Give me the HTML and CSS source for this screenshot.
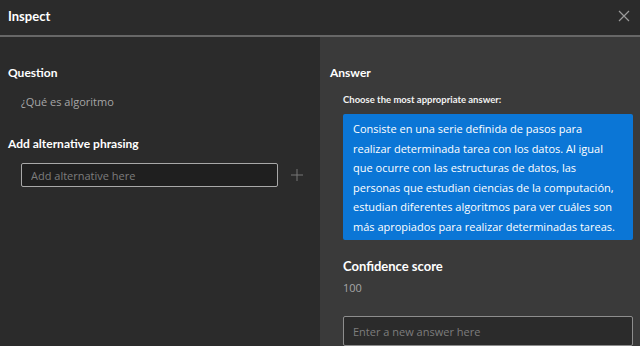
FILE: index.html
```html
<!DOCTYPE html>
<html lang="en">
<head>
    <meta charset="UTF-8">
    <title>Inspect</title>
    <link rel="stylesheet" href="styles.css">
</head>
<body>
    <div class="header">
        <div class="title">Inspect</div>
        <svg class="close" width="12" height="12" viewBox="0 0 12 12">
            <path d="M1 1 L11 11 M11 1 L1 11" stroke="#9a9a9a" stroke-width="1.2" fill="none"/>
        </svg>
    </div>

    <div class="panels">
        <div class="panel left">
            <div class="label">Question</div>
            <div class="question">¿Qué es algoritmo</div>

            <div class="label alt-label">Add alternative phrasing</div>
            <div class="alt-row">
                <input type="text" class="field alt-input" placeholder="Add alternative here">
                <svg class="plus" width="12" height="12" viewBox="0 0 12 12">
                    <path d="M6 0 V12 M0 6 H12" stroke="#777" stroke-width="1" fill="none"/>
                </svg>
            </div>
        </div>

        <div class="panel right">
            <div class="label">Answer</div>
            <div class="hint">Choose the most appropriate answer:</div>
            <div class="answer">Consiste en una serie definida de pasos para realizar determinada tarea con los datos. Al igual que ocurre con las estructuras de datos, las personas que estudian ciencias de la computación, estudian diferentes algoritmos para ver cuáles son más apropiados para realizar determinadas tareas.</div>

            <div class="label score-label">Confidence score</div>
            <div class="score">100</div>

            <input type="text" class="field new-answer" placeholder="Enter a new answer here">
        </div>
    </div>
</body>
</html>
```

FILE: styles.css
```css
* {
    margin: 0;
    padding: 0;
    box-sizing: border-box;
}

body {
    background-color: #2b2b2b;
    color: #ffffff;
    font-family: 'Open Sans', 'Noto Sans', sans-serif;
    font-size: 11px;
    height: 100vh;
    display: flex;
    flex-direction: column;
    overflow: hidden;
}

.header {
    flex-shrink: 0;
    height: 37px;
    display: flex;
    align-items: center;
    justify-content: space-between;
    padding: 0 10px 3px 8px;
    border-bottom: 2px solid #676767;
}

.title {
    font-family: 'Lato', sans-serif;
    font-size: 13px;
    font-weight: 700;
}

.panels {
    flex: 1;
    display: flex;
    min-height: 0;
}

.panel {
    padding-top: 27px;
}

.left {
    width: 320px;
    padding-left: 8px;
}

.right {
    flex: 1;
    background-color: #3a3a3a;
    padding-left: 10px;
    padding-right: 7px;
}

.label {
    font-family: 'Lato', sans-serif;
    font-size: 12px;
    font-weight: 700;
    line-height: 18px;
}

.question {
    color: #a6a6a6;
    margin: 11px 0 0 13px;
    line-height: 18px;
}

.alt-label {
    margin-top: 24px;
}

.alt-row {
    display: flex;
    align-items: center;
    margin: 10px 0 0 13px;
}

.field {
    height: 24px;
    background-color: #1f1f1f;
    border: 1px solid #a8a8a8;
    border-radius: 2px;
    color: #ffffff;
    font-family: inherit;
    font-size: 11px;
    padding: 0 9px;
    outline: none;
}

.field::placeholder {
    color: #7d7d7d;
}

.alt-input {
    width: 257px;
}

.plus {
    margin-left: 13px;
}

.hint {
    font-family: 'Lato', sans-serif;
    font-size: 9.5px;
    font-weight: 700;
    margin: 11px 0 0 13px;
    line-height: 14px;
    color: #f2f2f2;
}

.answer {
    margin: 7px 0 0 13px;
    background-color: #0b76d6;
    border-radius: 2px;
    padding: 5px 10px 4px;
    line-height: 19.5px;
    color: #ffffff;
}

.score-label {
    margin: 17px 0 0 13px;
    font-size: 13px;
}

.score {
    color: #a6a6a6;
    margin: 5px 0 0 13px;
    line-height: 16px;
}

.new-answer {
    display: block;
    margin: 20px 0 0 13px;
    width: 290px;
    height: 30px;
    background-color: #2b2b2b;
    border-color: #8d8d8d;
}
```
